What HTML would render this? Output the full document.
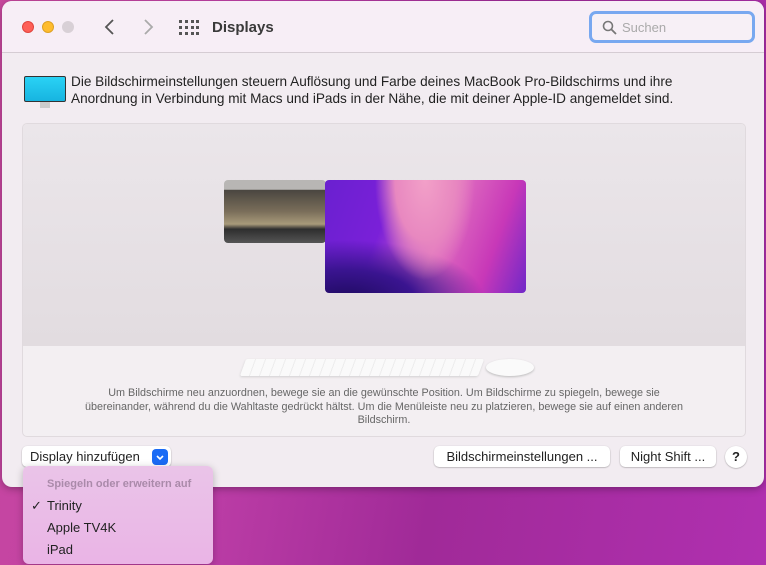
<!DOCTYPE html>
<html><head><meta charset="utf-8"><style>
*{margin:0;padding:0;box-sizing:border-box}
body{width:766px;height:565px;overflow:hidden;font-family:"Liberation Sans",sans-serif;
background:linear-gradient(100deg,#c8489e 0%,#c040a8 30%,#a02a98 60%,#b030b0 100%);position:relative}
.win{position:absolute;left:2px;top:1px;width:762px;height:486px;background:#f2ecf1;border-radius:10px;overflow:hidden;box-shadow:0 2px 8px rgba(0,0,0,.3)}
.tb{position:absolute;left:0;top:0;width:100%;height:52px;background:#f7eef6;border-bottom:1px solid #d5ccd3}
.dot{position:absolute;top:20px;width:12px;height:12px;border-radius:50%}
.t{position:absolute;color:#222;font-size:13px}
.btn{position:absolute;height:21px;background:#fff;border-radius:5px;box-shadow:0 0.5px 1.5px rgba(0,0,0,.35);font-size:13px;color:#222;line-height:21px;text-align:center}
</style></head><body>
<div class="win">
 <div class="tb">
  <div class="dot" style="left:20px;background:#fe5f57;border:0.5px solid #e0443e"></div>
  <div class="dot" style="left:40px;background:#febc2e;border:0.5px solid #dea123"></div>
  <div class="dot" style="left:60px;background:#d8d0d6"></div>
  <svg style="position:absolute;left:101px;top:17px" width="14" height="18"><path d="M10 2 L3 9 L10 16" stroke="#555" stroke-width="1.8" fill="none"/></svg>
  <svg style="position:absolute;left:139px;top:17px" width="14" height="18"><path d="M4 2 L11 9 L4 16" stroke="#aaa" stroke-width="1.8" fill="none"/></svg>
  <svg style="position:absolute;left:177px;top:19px" width="20" height="16">
   <g fill="#555"><rect x="0" y="0" width="3" height="3"/><rect x="6" y="0" width="3" height="3"/><rect x="12" y="0" width="3" height="3"/><rect x="17" y="0" width="3" height="3"/>
   <rect x="0" y="6" width="3" height="3"/><rect x="6" y="6" width="3" height="3"/><rect x="12" y="6" width="3" height="3"/><rect x="17" y="6" width="3" height="3"/>
   <rect x="0" y="12" width="3" height="3"/><rect x="6" y="12" width="3" height="3"/><rect x="12" y="12" width="3" height="3"/><rect x="17" y="12" width="3" height="3"/></g></svg>
  <div class="t" style="left:210px;top:18px;font-size:15px;font-weight:bold;color:#3a3a3a">Displays</div>
  <div style="position:absolute;left:587px;top:10px;width:166px;height:32px;border:3.5px solid #78a8f0;border-radius:7px;background:#f7f0f6"></div>
  <svg style="position:absolute;left:600px;top:19px" width="16" height="16"><circle cx="6" cy="6" r="4.5" stroke="#777" stroke-width="1.6" fill="none"/><path d="M9.5 9.5 L14 14" stroke="#777" stroke-width="1.8"/></svg>
  <div class="t" style="left:620px;top:19px;color:#aaa;font-size:13px">Suchen</div>
 </div>
 <div style="position:absolute;left:22px;top:75px;width:42px;height:26px;background:linear-gradient(#2ad2f5,#17b4e0);border:1.5px solid #333;border-radius:2px"></div>
 <div style="position:absolute;left:38px;top:101px;width:10px;height:6px;background:#ccc"></div>
 <div class="t" style="left:69px;top:72px;line-height:17px;font-size:13.6px">Die Bildschirmeinstellungen steuern Auflösung und Farbe deines MacBook Pro-Bildschirms und ihre<br>Anordnung in Verbindung mit Macs und iPads in der Nähe, die mit deiner Apple-ID angemeldet sind.</div>
 <div style="position:absolute;left:20px;top:122px;width:724px;height:314px;border-radius:5px;background:#f3eff2;border:1px solid #e0dade;overflow:hidden">
  <div style="position:absolute;left:0;top:0;width:100%;height:222px;background:linear-gradient(#ebe6ea,#e2dce0)"></div>
  <div style="position:absolute;left:201px;top:56px;width:102px;height:63px;border-radius:4px;background:linear-gradient(#b8b6b4 0,#b8b6b4 15%,#4a4640 16%,#7a6e5a 50%,#a89a7a 70%,#2e2e2e 78%,#555 100%)"></div>
  <div style="position:absolute;left:302px;top:56px;width:201px;height:113px;border-radius:4px;background:
   radial-gradient(ellipse 50px 100px at 100px 0px,#f2a0c8 0,#e888c0 60%,transparent 100%),
   radial-gradient(ellipse 140px 60px at 20px 120px,#1e0a60 0,#3a1490 50%,transparent 100%),
   linear-gradient(110deg,#6a20d0 0%,#7a20d8 30%,#e070c0 55%,#c838b8 80%,#7028c8 100%)"></div>
  <div style="position:absolute;left:220px;top:235px;width:238px;height:17px;background:repeating-linear-gradient(90deg,#fafafa 0 9px,#ececec 9px 10px);border-radius:2px;box-shadow:0 1px 2px #d0d0d0;transform:skewX(-20deg)"></div>
  <div style="position:absolute;left:463px;top:235px;width:48px;height:17px;border-radius:50%;background:#fafafa;box-shadow:0 1px 2px #bbb"></div>
  <div style="position:absolute;left:0;top:263px;width:100%;text-align:center;font-size:10.8px;color:#666;line-height:13.5px">Um Bildschirme neu anzuordnen, bewege sie an die gewünschte Position. Um Bildschirme zu spiegeln, bewege sie<br>übereinander, während du die Wahltaste gedrückt hältst. Um die Menüleiste neu zu platzieren, bewege sie auf einen anderen<br>Bildschirm.</div>
 </div>
 <div class="btn" style="left:20px;top:445px;width:149px;text-align:left;padding-left:8px">Display hinzufügen</div>
 <div style="position:absolute;left:150px;top:448px;width:16px;height:16px;background:#1a6bf5;border-radius:4px"><svg width="16" height="16"><path d="M5 7 L8 10 L11 7" stroke="#fff" stroke-width="1.6" fill="none"/></svg></div>
 <div class="btn" style="left:432px;top:445px;width:176px">Bildschirmeinstellungen ...</div>
 <div class="btn" style="left:618px;top:445px;width:96px">Night Shift ...</div>
 <div class="btn" style="left:723px;top:445px;width:22px;height:22px;border-radius:50%;line-height:22px;font-weight:bold">?</div>
</div>
<div style="position:absolute;left:23px;top:466px;width:190px;height:98px;border-radius:6px;background:linear-gradient(#eac4e8,#eab4e6);box-shadow:0 2px 8px rgba(0,0,0,.25)">
 <div style="position:absolute;left:24px;top:12px;font-size:11px;color:#aa8aaa;font-weight:bold">Spiegeln oder erweitern auf</div>
 <div style="position:absolute;left:8px;top:32px;font-size:13px;color:#222">✓</div>
 <div style="position:absolute;left:24px;top:32px;font-size:13px;color:#222">Trinity</div>
 <div style="position:absolute;left:24px;top:54px;font-size:13px;color:#222">Apple TV4K</div>
 <div style="position:absolute;left:24px;top:76px;font-size:13px;color:#222">iPad</div>
</div>
</body></html>
